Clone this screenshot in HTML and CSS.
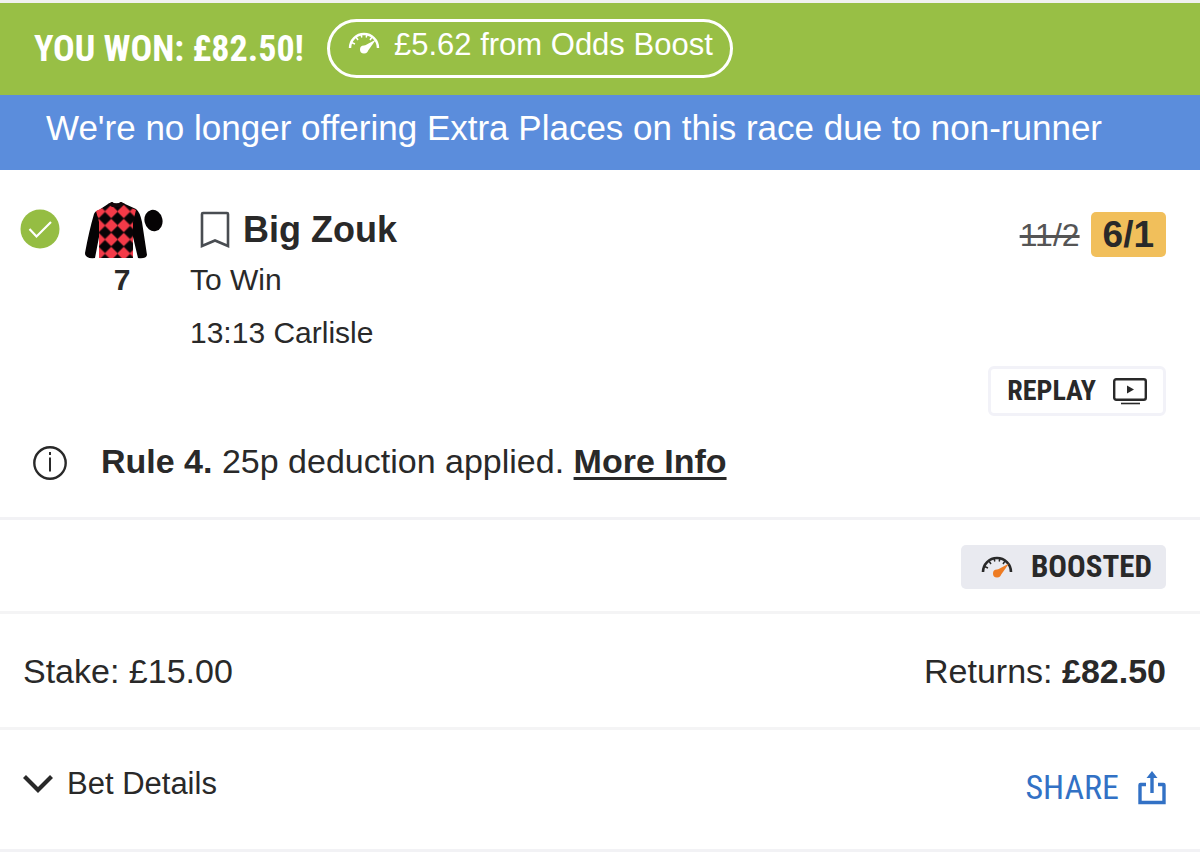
FILE: index.html
```html
<!DOCTYPE html>
<html lang="en">
<head>
<meta charset="utf-8">
<meta name="viewport" content="width=device-width, initial-scale=1">
<title>Settled bet</title>
<link rel="stylesheet" href="styles.css">
</head>
<body>
<main class="bet">
  <header class="won">
    <h1 class="won-title condensed">YOU WON: £82.50!</h1>
    <div class="boost-pill">
      <svg class="gauge" viewBox="0 0 32 22" aria-hidden="true">
        <path d="M2 16A14 14 0 0 1 30 16" fill="none" stroke="currentColor" stroke-width="2.400"/>
        <path d="M3.500 10.500l3.500 1.500M8 5l2 3M13 2l.8 3.500M19 2l-.8 3.500M24 5l-2 3" stroke="currentColor" stroke-width="1.500"/>
        <path d="M14 15L28 7.500L19.500 19.500Z" fill="currentColor"/>
        <circle cx="16" cy="17.500" r="4" fill="currentColor"/>
      </svg>
      <span>£5.62 from Odds Boost</span>
    </div>
  </header>
  <p class="notice">We're no longer offering Extra Places on this race due to non-runner</p>

  <section class="selection">
    <div class="runner">
      <svg class="tick" viewBox="0 0 40 40" role="img" aria-label="Won">
        <circle cx="20" cy="20" r="19.500" fill="#95bd43"/>
        <path d="M9.500 20l7 7.500L31 13" fill="none" stroke="#fff" stroke-width="2.200"/>
      </svg>
      <div class="silk-box">
        <svg class="silk" viewBox="0 0 80 58" role="img" aria-label="Jockey silks">
          <defs>
            <pattern id="diamonds" width="12.500" height="14" x="14.750" y="9.500" patternUnits="userSpaceOnUse">
              <path d="M0 0H12.500V14H0Z" fill="#f43a48"/>
              <path d="M6.250 .8L12.500 7L6.250 13.200L0 7Z" fill="#080406" stroke="#080406" stroke-width=".6"/>
            </pattern>
          </defs>
          <path d="M15 8L24 2L28 0Q32 3 37 0L41 2L52 7Q56 10 58 20L63 53Q62 57 54 56L49 35V56H15V35L11 56Q1 57 1 51Q5 29 10 12Q11 9 15 8Z" fill="#050304"/>
          <path d="M12 9L25 3H41L52 8L49 20V56H15V20Z" fill="url(#diamonds)"/>
          <path d="M24 2L28 0Q32 3 37 0L41 2L36 5H28Z" fill="#17080b"/>
          <ellipse cx="69.500" cy="18.500" rx="9" ry="10.800" fill="#050304" transform="rotate(-12 69.500 18.500)"/>
        </svg>
        <span class="silk-number">7</span>
      </div>
      <div class="runner-info">
        <h2 class="runner-name">
          <svg class="bookmark" viewBox="0 0 30 38" aria-hidden="true">
            <path d="M2 35V3Q2 2 3 2H27Q28 2 28 3V35L15 29.500Z" fill="none" stroke="#494d52" stroke-width="2.600"/>
          </svg>
          <span>Big Zouk</span>
        </h2>
        <p class="market">To Win</p>
        <p class="meeting">13:13 Carlisle</p>
      </div>
      <div class="odds">
        <s class="odds-old">11/2</s>
        <strong class="odds-new">6/1</strong>
      </div>
    </div>
    <button type="button" class="replay condensed">
      <span>REPLAY</span>
      <svg class="tv" viewBox="0 0 34 28" aria-hidden="true">
        <rect x="1.200" y="2.200" width="31.600" height="20.600" rx="2" fill="none" stroke="currentColor" stroke-width="2.400"/>
        <path d="M14 8.500L21 12.500L14 16.500Z" fill="currentColor"/>
        <path d="M8 26.500H27" stroke="currentColor" stroke-width="1.600"/>
      </svg>
    </button>
    <div class="rule">
      <svg class="info" viewBox="0 0 34 34" aria-hidden="true">
        <circle cx="17" cy="17" r="15.700" fill="none" stroke="currentColor" stroke-width="2.400"/>
        <path d="M17 11.500V25.500M17 6V9" stroke="currentColor" stroke-width="2"/>
      </svg>
      <p><b>Rule 4.</b> 25p deduction applied. <a class="more" href="#rule4">More Info</a></p>
    </div>
  </section>

  <section class="boosted-row">
    <div class="boosted condensed">
      <svg class="gauge" viewBox="0 0 32 22" aria-hidden="true">
        <path d="M2 16A14 14 0 0 1 30 16" fill="none" stroke="currentColor" stroke-width="2.600"/>
        <path d="M3.500 10.500l3.500 1.500M8 5l2 3M13 2l.8 3.500M19 2l-.8 3.500M24 5l-2 3" stroke="currentColor" stroke-width="1.500"/>
        <path d="M14 15L28 7.500L19.500 19.500Z" fill="#ee7c23"/>
        <circle cx="16" cy="17.500" r="4" fill="#ee7c23"/>
      </svg>
      <span>BOOSTED</span>
    </div>
  </section>

  <section class="totals">
    <p>Stake: £15.00</p>
    <p>Returns: <b>£82.50</b></p>
  </section>

  <footer class="actions">
    <button type="button" class="details" aria-expanded="false">
      <svg class="chevron" viewBox="0 0 30 20" aria-hidden="true">
        <path d="M1.500 2.500L15 16L28.500 2.500" fill="none" stroke="currentColor" stroke-width="4.200"/>
      </svg>
      <span>Bet Details</span>
    </button>
    <button type="button" class="share condensed">
      <span>SHARE</span>
      <svg class="share-icon" viewBox="0 0 28 34" aria-hidden="true">
        <path d="M8 13.500H2.500Q2 13.500 2 14V31.500H26V14Q26 13.500 25.500 13.500H20" fill="none" stroke="currentColor" stroke-width="3.400"/>
        <path d="M14 22V5" stroke="currentColor" stroke-width="3.400"/>
        <path d="M8.500 7L14 0L19.500 7Z" fill="currentColor"/>
      </svg>
    </button>
  </footer>
</main>
</body>
</html>
```
FILE: styles.css
```css
* {
  box-sizing: border-box;
}

body {
  margin: 0;
  background: #fff;
  color: #292929;
  font-family: "Liberation Sans", Arial, sans-serif;
  font-size: 31px;
  line-height: 40px;
}

h1, h2, p {
  margin: 0;
}

svg {
  display: block;
  flex: none;
}

button {
  padding: 0;
  border: 0;
  background: none;
  color: inherit;
  font: inherit;
  cursor: pointer;
}

.condensed {
  font-family: "Roboto Condensed", "Liberation Sans Narrow", Roboto, sans-serif;
}

.bet {
  border-top: 3px solid #f0f1ef;
}

.won {
  display: flex;
  align-items: center;
  gap: 23px;
  padding: 16px 34px 17px;
  background: #98bf45;
  color: #fff;
}

.won-title {
  font-size: 36px;
  font-weight: 700;
}

.boost-pill {
  display: flex;
  align-items: center;
  gap: 14px;
  padding: 3px 17px 10px 18px;
  border: 3px solid #fff;
  border-radius: 30px;
}

.boost-pill span {
  line-height: 40px;
}

.gauge {
  width: 32px;
  height: 22px;
}

.boost-pill .gauge {
  margin-bottom: 5px;
}

.notice {
  padding: 13px 46px 22px;
  background: #5b8ddc;
  color: #fff;
  font-size: 35px;
}

.selection {
  padding: 32px 34px 36px 20px;
  border-bottom: 3px solid #f2f2f5;
}

.runner {
  display: flex;
  align-items: flex-start;
}

.tick {
  width: 40px;
  height: 40px;
  margin: 7px 24px 0 0;
}

.silk-box {
  display: flex;
  flex-direction: column;
  width: 80px;
}

.silk {
  width: 80px;
  height: 58px;
}

.silk-number {
  padding-right: 4px;
  font-size: 30px;
  font-weight: 700;
  text-align: center;
}

.runner-info {
  flex: 1;
  margin-left: 26px;
}

.runner-name {
  display: flex;
  align-items: center;
  gap: 13px;
  padding-left: 10px;
  font-size: 36px;
  line-height: 56px;
}

.bookmark {
  width: 30px;
  height: 38px;
}

.market,
.meeting {
  font-size: 30px;
  line-height: 44px;
}

.meeting {
  margin-top: 9px;
}

.odds {
  display: flex;
  align-items: center;
  gap: 11px;
  padding-top: 10px;
}

.odds-old {
  color: #555;
  font-size: 32px;
}

.odds-new {
  padding: 0 12px;
  border-radius: 5px;
  background: #f1bf5b;
  font-size: 37px;
  line-height: 45px;
}

.replay {
  display: flex;
  align-items: center;
  gap: 17px;
  margin: 11px 0 0 auto;
  padding: 3px 16px;
  border: 3px solid #f2f2f8;
  border-radius: 6px;
  font-size: 28px;
  font-weight: 700;
  line-height: 38px;
}

.tv {
  width: 34px;
  height: 28px;
}

.rule {
  display: flex;
  align-items: center;
  gap: 34px;
  margin-top: 25px;
  padding-left: 13px;
  font-size: 34px;
}

.info {
  width: 34px;
  height: 34px;
  margin-top: 4px;
}

.more {
  color: inherit;
  font-weight: 700;
  text-decoration-thickness: 3px;
  text-underline-offset: 4px;
}

.boosted-row {
  display: flex;
  justify-content: flex-end;
  padding: 25px 34px 22px;
  border-bottom: 3px solid #f4f4f5;
}

.boosted {
  display: flex;
  align-items: center;
  gap: 18px;
  padding: 0 14px 0 20px;
  border-radius: 5px;
  background: #e9eaf0;
  font-size: 31px;
  font-weight: 700;
  line-height: 44px;
}

.totals {
  display: flex;
  justify-content: space-between;
  padding: 37px 34px 36px 23px;
  border-bottom: 3px solid #f4f4f5;
  font-size: 34px;
}

.actions {
  display: flex;
  justify-content: space-between;
  padding: 32px 34px 36px 23px;
  border-bottom: 3px solid #f2f2f5;
}

.details {
  display: flex;
  align-items: center;
  gap: 14px;
  padding-bottom: 7px;
  line-height: 44px;
}

.chevron {
  width: 30px;
  height: 20px;
}

.share {
  display: flex;
  align-items: center;
  gap: 19px;
  color: #3271c5;
  font-size: 34px;
  line-height: 51px;
}

.share-icon {
  width: 28px;
  height: 34px;
}
```
